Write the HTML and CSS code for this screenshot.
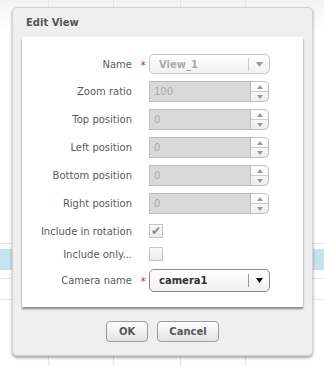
FILE: index.html
```html
<!DOCTYPE html>
<html>
<head>
  <title>Edit View</title>
  <link rel="stylesheet" href="styles.css">
</head>
<body>
  <div class="dialog">
    <div class="dialog-title">Edit View</div>
    <div class="dialog-body">
      <div class="form-row">
        <label>Name</label><span class="required">*</span>
        <div class="select disabled">
          <span class="select-value">View_1</span>
          <span class="select-arrow"><svg width="7" height="5" viewBox="0 0 7 5"><polygon points="0,0 7,0 3.5,5" /></svg></span>
        </div>
      </div>
      <div class="form-row">
        <label>Zoom ratio</label><span></span>
        <div class="spin"><div class="spin-field">100</div><div class="spin-buttons"><span class="spin-up"></span><span class="spin-down"></span></div></div>
      </div>
      <div class="form-row">
        <label>Top position</label><span></span>
        <div class="spin"><div class="spin-field">0</div><div class="spin-buttons"><span class="spin-up"></span><span class="spin-down"></span></div></div>
      </div>
      <div class="form-row">
        <label>Left position</label><span></span>
        <div class="spin"><div class="spin-field">0</div><div class="spin-buttons"><span class="spin-up"></span><span class="spin-down"></span></div></div>
      </div>
      <div class="form-row">
        <label>Bottom position</label><span></span>
        <div class="spin"><div class="spin-field">0</div><div class="spin-buttons"><span class="spin-up"></span><span class="spin-down"></span></div></div>
      </div>
      <div class="form-row">
        <label>Right position</label><span></span>
        <div class="spin"><div class="spin-field">0</div><div class="spin-buttons"><span class="spin-up"></span><span class="spin-down"></span></div></div>
      </div>
      <div class="form-row check-row">
        <label>Include in rotation</label><span></span>
        <div class="checkbox checked">&#10004;</div>
      </div>
      <div class="form-row check-row">
        <label>Include only...</label><span></span>
        <div class="checkbox"></div>
      </div>
      <div class="form-row camera-row">
        <label>Camera name</label><span class="required">*</span>
        <div class="select">
          <span class="select-value">camera1</span>
          <span class="select-arrow"><svg width="7" height="5" viewBox="0 0 7 5"><polygon points="0,0 7,0 3.5,5" /></svg></span>
        </div>
      </div>
    </div>
    <div class="dialog-buttons">
      <button class="btn btn-ok">OK</button>
      <button class="btn btn-cancel">Cancel</button>
    </div>
  </div>
</body>
</html>
```

FILE: styles.css
```css
body {
  margin: 0;
  padding-top: 7px;
  height: 366px;
  box-sizing: border-box;
  overflow: hidden;
  font-family: "DejaVu Sans", Verdana, sans-serif;
  font-size: 10px;
  color: #555;
  background:
    linear-gradient(#e3e3e3, #e3e3e3) 48px 0 / 1px 100% no-repeat,
    linear-gradient(#e3e3e3, #e3e3e3) 113px 0 / 1px 100% no-repeat,
    linear-gradient(#e3e3e3, #e3e3e3) 180px 0 / 1px 100% no-repeat,
    linear-gradient(#e3e3e3, #e3e3e3) 245px 0 / 1px 100% no-repeat,
    linear-gradient(#c6e2ee, #c6e2ee) 0 249px / 100% 21px no-repeat,
    linear-gradient(#e6e6e6, #e6e6e6) 0 243px / 100% 1px no-repeat,
    linear-gradient(#e6e6e6, #e6e6e6) 0 278px / 100% 1px no-repeat,
    linear-gradient(#e9e9e9, #e9e9e9) 0 299px / 100% 1px no-repeat,
    linear-gradient(#f3f3f3, #fff 30px) no-repeat;
  background-color: #fff;
}

.dialog {
  margin-left: 12px;
  width: 301px;
  height: 349px;
  box-sizing: border-box;
  padding: 0 9px;
  background: #efefef;
  border: 1px solid #d2d2d2;
  border-radius: 5px;
  box-shadow: 0 2px 3px rgba(0, 0, 0, 0.35);
}

.dialog-title {
  height: 29px;
  padding: 8px 0 0 4px;
  box-sizing: border-box;
  font-weight: bold;
  font-size: 10px;
  line-height: 14px;
  color: #555;
}

.dialog-body {
  height: 270px;
  box-sizing: border-box;
  padding-top: 17px;
  background: #fff;
  box-shadow: 0 2px 2px rgba(0, 0, 0, 0.45);
}

.form-row {
  display: grid;
  grid-template-columns: 110px 17px 121px;
  align-items: center;
  height: 21px;
  margin-bottom: 7px;
}

.form-row:first-child {
  height: 20px;
}

.form-row label {
  text-align: right;
  white-space: nowrap;
  color: #5a5a5a;
}

.required {
  color: #cc2a2a;
  text-align: right;
  padding-right: 3px;
  font-size: 11px;
  line-height: 10px;
  padding-top: 3px;
}

.select {
  display: flex;
  align-items: center;
  height: 20px;
  box-sizing: border-box;
  border: 1px solid #888;
  border-radius: 5px;
  background: linear-gradient(#fff, #f1f1f1);
  font-weight: bold;
  color: #333;
}

.select.disabled {
  border-color: #c8c8c8;
  color: #aaa;
}

.select-value {
  flex: 1;
  padding-left: 9px;
}

.select-arrow {
  display: flex;
  align-items: center;
  justify-content: center;
  width: 20px;
  height: 13px;
  border-left: 1px solid #999;
  fill: #111;
}

.select.disabled .select-arrow {
  border-left-color: #ccc;
  fill: #999;
}

.spin {
  display: flex;
  width: 120px;
  height: 21px;
}

.spin-field {
  width: 102px;
  box-sizing: border-box;
  padding-left: 4px;
  line-height: 19px;
  background: #d9d9d9;
  border: 1px solid #bcbcbc;
  color: #a9a9a9;
}

.spin-buttons {
  display: flex;
  flex-direction: column;
  width: 18px;
  box-sizing: border-box;
  border: 1px solid #bcbcbc;
  border-left: none;
  border-radius: 0 5px 5px 0;
  background: linear-gradient(#fff, #eee);
}

.spin-up,
.spin-down {
  flex: 1;
  display: flex;
  align-items: center;
  justify-content: center;
}

.spin-up {
  border-bottom: 1px solid #ccc;
}

.spin-up::after,
.spin-down::after {
  content: "";
  border-left: 3px solid transparent;
  border-right: 3px solid transparent;
}

.spin-up::after {
  border-bottom: 4px solid #999;
}

.spin-down::after {
  border-top: 4px solid #999;
}

.check-row {
  height: 20px;
  margin-bottom: 3px;
}

.check-row + .check-row {
  margin-bottom: 4px;
}

.checkbox {
  width: 14px;
  height: 14px;
  box-sizing: border-box;
  border: 1px solid #c4c4c4;
  background: linear-gradient(#fafafa, #ececec);
  color: #8a8a8a;
  font-size: 12px;
  line-height: 12px;
  text-align: center;
}

.camera-row {
  height: 25px;
}

.camera-row .select {
  height: 23px;
}

.dialog-buttons {
  display: flex;
  justify-content: center;
  gap: 9px;
  margin-top: 14px;
}

.btn {
  height: 21px;
  padding: 0;
  font-family: "DejaVu Sans", Verdana, sans-serif;
  font-size: 10px;
  font-weight: bold;
  color: #555;
  background: linear-gradient(#fdfdfd, #e4e4e4);
  border: 1px solid #9a9a9a;
  border-radius: 4px;
}

.btn-ok {
  width: 42px;
}

.btn-cancel {
  width: 62px;
}
```
